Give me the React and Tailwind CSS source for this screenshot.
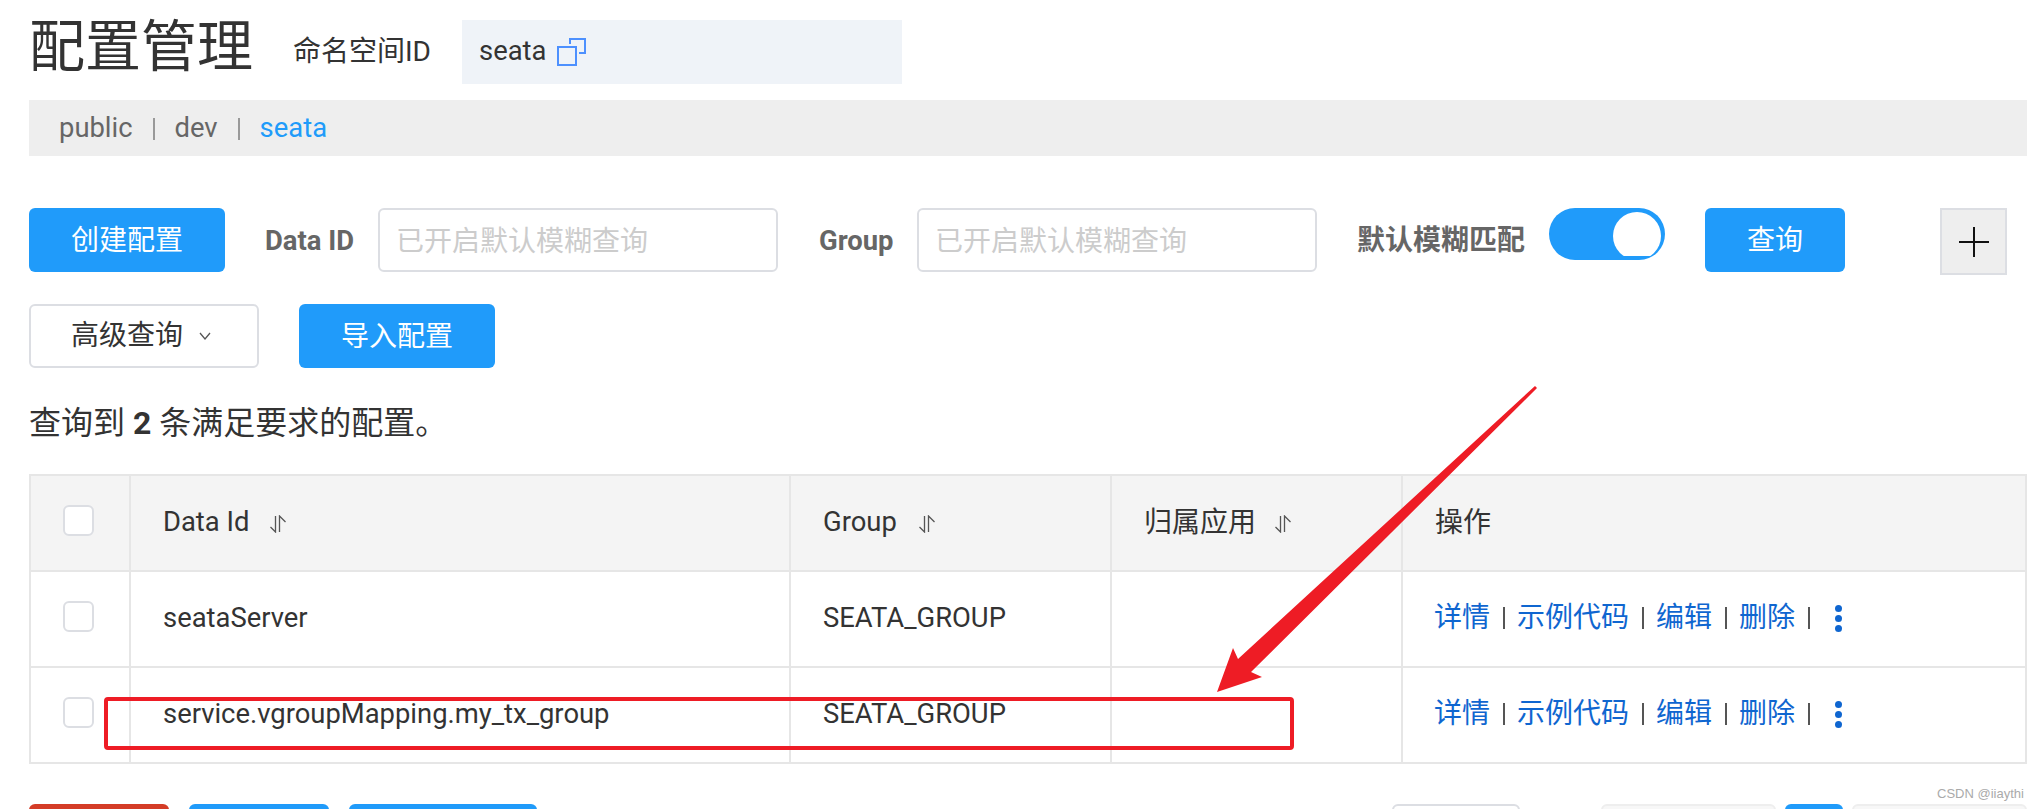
const FONT = "font-['Roboto','Noto_Sans_CJK_SC',sans-serif]";

function Btn({ children, className = 'w-[196px]' }) {
  return (
    <button className={`h-16 shrink-0 rounded-md bg-[#209bfa] pt-0.5 text-[28px] text-white ${className}`}>
      {children}
    </button>
  );
}

function SearchInput() {
  return (
    <input
      readOnly
      placeholder="已开启默认模糊查询"
      className="h-16 w-[400px] rounded-md border-2 border-[#dcdee3] px-[16px] pt-0.5 text-[28px] outline-none placeholder:text-[#cccccc]"
    />
  );
}

function CopyIcon() {
  return (
    <svg width="30" height="30" viewBox="0 0 30 30" fill="none" stroke="#4d90fe" strokeWidth="2" className="ml-[10px]">
      <rect x="2" y="10" width="18" height="18" />
      <path d="M14 7V2H29V16H23" />
    </svg>
  );
}

function SortIcon({ className }) {
  return (
    <svg width="16" height="18" viewBox="0 0 16 18" fill="none" stroke="#555" strokeWidth="1.3" className={`mt-0.5 ${className}`}>
      <path d="M5.5 1V17L0.5 12" />
      <path d="M9.5 17V1L15.5 7" />
    </svg>
  );
}

function Checkbox() {
  return <span className="mb-[6px] ml-[32px] block h-[31px] w-[31px] rounded-md border-2 border-[#dcdee3] bg-white" />;
}

function Cell({ children, className = '' }) {
  return <div className={`flex items-center border-l-2 border-[#e6e6e6] ${className}`}>{children}</div>;
}

function Row({ children, head }) {
  return (
    <div className={`grid h-24 grid-cols-[100px_660px_321px_291px_1fr] border-b-2 border-[#e6e6e6] ${head ? 'bg-[#f4f4f4]' : ''}`}>
      {children}
    </div>
  );
}

function Actions() {
  const sep = <span className="mx-[12.5px] h-[22px] w-0.5 bg-[#555]" />;
  return (
    <div className="mb-[2px] flex items-center pl-[31px] text-[28px] text-[#0f66d0]">
      详情{sep}示例代码{sep}编辑{sep}删除{sep}
      <span className="ml-[13px] flex flex-col gap-[3px]">
        <i className="h-[7px] w-[7px] rounded-full bg-[#0f66d0]" />
        <i className="h-[7px] w-[7px] rounded-full bg-[#0f66d0]" />
        <i className="h-[7px] w-[7px] rounded-full bg-[#0f66d0]" />
      </span>
    </div>
  );
}

function ConfigRow({ id }) {
  return (
    <Row>
      <Cell><Checkbox /></Cell>
      <Cell className="pl-[32px]">{id}</Cell>
      <Cell className="pl-[32px]">SEATA_GROUP</Cell>
      <Cell />
      <Cell><Actions /></Cell>
    </Row>
  );
}

export default function App() {
  return (
    <div className={`relative h-[809px] overflow-hidden bg-white pl-[29px] text-[27.4px] text-[#333] ${FONT}`}>
      {/* page heading with namespace */}
      <div className="flex h-[100px] pt-5">
        <h1 className="w-[264px] text-[56px] leading-[54px] font-normal">配置管理</h1>
        <span className="w-[169px] pt-[14px] text-[28px] leading-[36px]">命名空间ID</span>
        <div className="flex h-16 w-[440px] items-center bg-[#eff3f8] pl-[17px]">
          seata
          <CopyIcon />
        </div>
      </div>

      {/* namespace switcher */}
      <div className="mr-[4px] flex h-14 items-center bg-[#eeeeee] pt-0.5 pl-[30px] text-[#666]">
        <span>public</span>
        <span className="mx-5 h-[22px] w-0.5 bg-[#999]" />
        <span>dev</span>
        <span className="mx-5 h-[22px] w-0.5 bg-[#999]" />
        <span className="text-[#209bfa]">seata</span>
      </div>

      {/* search bar */}
      <div className="mt-[52px] flex items-start">
        <Btn>创建配置</Btn>
        <span className="ml-10 w-[113px] text-[#666] leading-[66px] font-bold">Data ID</span>
        <SearchInput />
        <span className="ml-[41px] w-[98px] text-[#666] leading-[66px] font-bold">Group</span>
        <SearchInput />
        <span className="ml-10 w-[192px] text-[28px] text-[#666] leading-[66px] font-bold">默认模糊匹配</span>
        <div className="flex h-[52px] w-[116px] justify-end rounded-[26px] bg-[#209bfa] pt-1 pr-1">
          {/* knob is clipped flat along its lower edge */}
          <div className="h-11 w-12 overflow-hidden">
            <div className="h-12 w-12 rounded-full bg-white" />
          </div>
        </div>
        <Btn className="ml-10 w-[140px]">查询</Btn>
        <div className="ml-[95px] flex h-[67px] w-[67px] items-center justify-center border-2 border-[#dcdee3] bg-[#eeeeee]">
          <svg width="30" height="30" viewBox="0 0 30 30" stroke="#111" strokeWidth="2">
            <path d="M15 0V30M0 15H30" />
          </svg>
        </div>
      </div>

      <div className="mt-[29px] flex gap-10">
        <div className="flex h-16 w-[230px] items-center rounded-md border-2 border-[#dcdee3] pl-10 text-[28px]">
          高级查询
          <svg width="12" height="8" viewBox="0 0 12 8" fill="none" stroke="#555" strokeWidth="1.3" className="ml-4">
            <path d="M1 1L6 7L11 1" />
          </svg>
        </div>
        <Btn>导入配置</Btn>
      </div>

      <p className="mt-[35px] text-[32px] leading-[40px]">
        查询到 <b>2</b> 条满足要求的配置。
      </p>

      {/* config table */}
      <div className="mt-[31px] mr-[4px] border-t-2 border-r-2 border-[#e6e6e6]">
        <Row head>
          <Cell><Checkbox /></Cell>
          <Cell className="pl-[32px]">Data Id<SortIcon className="ml-[21px]" /></Cell>
          <Cell className="pl-[32px]">Group<SortIcon className="ml-[22px]" /></Cell>
          <Cell className="pl-[32px] text-[28px]">归属应用<SortIcon className="ml-[19px]" /></Cell>
          <Cell className="pl-[32px] text-[28px]">操作</Cell>
        </Row>
        <ConfigRow id="seataServer" />
        <ConfigRow id="service.vgroupMapping.my_tx_group" />
      </div>

      {/* batch actions and pagination, cut by the window edge */}
      <div className="mt-10 flex">
        <div className="h-16 w-[140px] rounded-md bg-[#d43c27]" />
        <div className="ml-5 h-16 w-[140px] rounded-md bg-[#209bfa]" />
        <div className="ml-5 h-16 w-[188px] rounded-md bg-[#209bfa]" />
        <div className="ml-[855px] h-16 w-[128px] rounded-md border-2 border-[#dcdee3]" />
        <div className="ml-[81px] h-16 w-[175px] rounded-md border-2 border-[#eeeeee] bg-[#f7f7f7]" />
        <div className="ml-[9px] h-16 w-[58px] rounded-md bg-[#209bfa]" />
        <div className="ml-[9px] h-16 w-[175px] rounded-md border-2 border-[#eeeeee] bg-[#f7f7f7]" />
      </div>

      {/* highlight over the second row */}
      <div className="absolute top-[697px] left-[104px] h-[53px] w-[1190px] rounded-sm border-4 border-[#ee1c25]" />
      <svg className="absolute top-0 left-0" width="2031" height="809" fill="#ee1c25">
        <path d="M1535 386L1537 388L1251 672L1262 677L1217 692L1233 648L1238 659Z" />
      </svg>
      <span className="absolute top-[784px] left-[1937px] font-['Liberation_Sans',sans-serif] text-[13px] text-[#aaa]">CSDN @iiaythi</span>
    </div>
  );
}
